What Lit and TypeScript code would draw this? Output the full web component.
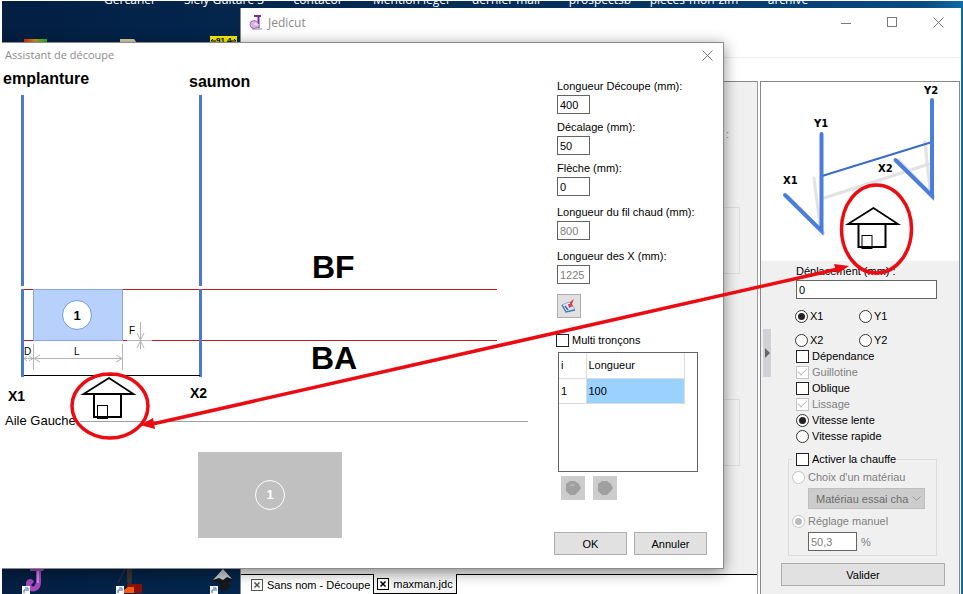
import { LitElement, html, css, svg } from "lit";
import { customElement, state } from "lit/decorators.js";

const house = svg`
  <path d="M109 378 L83.500 394 H133.500 Z" fill="none" stroke="#000" stroke-width="1.800" />
  <rect x="94" y="394" width="27" height="23" fill="none" stroke="#000" stroke-width="2" />
  <rect x="97.500" y="405.500" width="10" height="13" fill="none" stroke="#000" stroke-width="1" />
`;

@customElement("wing-diagram")
class WingDiagram extends LitElement {
  static styles = css`
    :host { display: block; }
    svg { display: block; }
    text { font-family: "Liberation Sans", Arial, sans-serif; }
    .name { font-size: 16px; font-weight: 700; }
    .edge { font-size: 32px; font-weight: 700; }
    .axis { font-size: 14px; font-weight: 700; }
    .dim { font-size: 10px; }
    .num { font-size: 13px; font-weight: 700; text-anchor: middle; }
    .rail { stroke: #4a7ac8; stroke-width: 3; }
    .hot { fill: #c01c28; }
    .cote { stroke: #b4b4b4; fill: none; }
  `;
  render() {
    return html`<svg width="540" height="345" viewBox="0 67 540 345">
      <text class="name" x="3" y="84">emplanture</text>
      <text class="name" x="189" y="87">saumon</text>
      <rect class="hot" x="24" y="289" width="473" height="1" />
      <rect class="hot" x="24" y="340" width="10" height="1" />
      <rect class="hot" x="123" y="340" width="4" height="1" />
      <rect class="hot" x="152" y="340" width="345" height="1" />
      <path class="rail" d="M22.500 95V286 M22.500 289V377 M200.500 95V286 M200.500 289V377" />
      <path d="M24 375.500H200" stroke="#000" />
      <rect x="33.500" y="289.500" width="89" height="51" fill="#b8d1fc" stroke="#85a9e2" />
      <circle cx="77" cy="315" r="14.500" fill="#fff" stroke="#6f9ae0" />
      <text class="num" x="77" y="320">1</text>
      <path class="cote" d="M33.500 344V370 M122.500 344V370 M24 358.500H122 M40 355L34 358.500L40 362 M116 355L122 358.500L116 362 M27 356L24 358.500L27 361 M29 356L33 358.500L29 361" />
      <path class="cote" d="M127 340.500H152 M140.500 322V349 M137 333L140.500 340L144 333 M137 348L140.500 341L144 348" />
      <text class="dim" x="24" y="355">D</text>
      <text class="dim" x="74" y="355">L</text>
      <text class="dim" x="129" y="334">F</text>
      <text class="edge" x="312" y="278">BF</text>
      <text class="edge" x="311" y="369">BA</text>
      <text class="axis" x="8" y="401">X1</text>
      <text class="axis" x="190" y="398">X2</text>
    </svg>`;
  }
}

@customElement("machine-diagram")
class MachineDiagram extends LitElement {
  static styles = css`
    :host { display: block; background: #fff; }
    svg { display: block; }
    text { font: 700 10px "DejaVu Sans", Verdana, sans-serif; }
    .shade { stroke: #e2e2e2; stroke-width: 3; fill: none; stroke-linecap: round; }
    .bar { stroke: #4b7ddc; stroke-width: 4; fill: none; stroke-linecap: round; }
    .wire { stroke: #3a6cc8; stroke-width: 2; }
  `;
  render() {
    return html`<svg width="198" height="179" viewBox="761 82 198 179">
      <path class="shade" d="M814 178L820 226 M925 142L930 190 M824 198L929 164 M788 196L824 233 M899 160L934 197" />
      <path class="wire" d="M822 176L932 142" />
      <path class="bar" d="M785 195L821.500 231V134 M895.500 160L932 196V100" />
      <text x="814" y="127">Y1</text>
      <text x="924" y="94">Y2</text>
      <text x="783" y="184">X1</text>
      <text x="878" y="172">X2</text>
    </svg>`;
  }
}

const controls = css`
  * { box-sizing: border-box; }
  input, button, select, label, table, p, h2 { font: inherit; margin: 0; }
  input[type="text"] {
    height: 19px; padding: 0 2px; border: 1px solid #646464; border-radius: 0;
    background: #fff; color: #000; display: block;
  }
  input[type="text"]:disabled { color: #808080; }
  input[type="checkbox"], input[type="radio"] {
    appearance: none; flex: none; width: 13px; height: 13px; background: #fff;
    border: 1px solid #222; display: grid; place-items: center;
  }
  input[type="radio"] { border-radius: 50%; border-color: #333; }
  input[type="radio"]:checked::before {
    content: ""; width: 7px; height: 7px; border-radius: 50%; background: #222;
  }
  input[type="checkbox"]:checked::before {
    content: ""; width: 8px; height: 4px; margin-bottom: 3px;
    border: solid #bbb; border-width: 0 0 1px 1px; transform: rotate(-45deg);
  }
  input[type="checkbox"]:disabled, input[type="radio"]:disabled { border-color: #c4c4c4; }
  input[type="radio"]:disabled::before { background: #bbb; }
  .option { display: flex; align-items: center; gap: 3px; height: 16px; white-space: nowrap; }
  .option.off { color: #808080; }
  .push {
    height: 23px; padding: 0; border: 1px solid #adadad; border-radius: 0;
    background: #e1e1e1; color: #000;
  }
`;

@customElement("cut-dialog")
class CutDialog extends LitElement {
  static styles = [controls, css`
    :host { display: flex; flex-direction: column; }
    .bar {
      height: 24px; padding: 0 10px 0 5px; display: flex; align-items: center;
      justify-content: space-between; color: #8c8c8c;
    }
    .title { font: 11px/16px "Open Sans", "Segoe UI", sans-serif; }
    .close { border: 0; padding: 0; background: none; display: block; }
    .close svg { display: block; }
    .content { flex: 1; display: flex; justify-content: space-between; }
    .heading { display: flex; align-items: center; height: 18px; padding-left: 5px; gap: 4px; }
    .heading h2 { font-size: 13px; font-weight: 400; }
    .heading hr { flex: 1; margin: 0 12px 0 0; border: 0; border-top: 1px solid #a0a0a0; }
    .preview {
      margin: 22px 0 0 198px; width: 144px; height: 86px; background: #c0c0c0;
      display: flex; align-items: center; justify-content: center;
    }
    .badge {
      width: 30px; height: 30px; border: 1px solid #fff; border-radius: 50%; color: #fff;
      font: 700 13px/28px "Liberation Sans", Arial, sans-serif; text-align: center;
    }
    .form { width: 169px; padding-top: 11px; }
    .fields { display: flex; flex-direction: column; gap: 5px; padding-left: 3px; }
    .fields.fixed { gap: 8px; margin-top: 8px; }
    .field label { display: block; height: 17px; line-height: 16px; white-space: nowrap; }
    .field input { width: 33px; }
    .tool {
      width: 24px; height: 24px; margin: 10px 0 0 3px; padding: 3px; display: block;
      border: 1px solid #adadad; background: #e1e1e1;
    }
    .multi { margin: 14px 0 4px 2px; }
    .grid { width: 140px; height: 120px; margin-left: 4px; border: 1px solid #646464; }
    table { border-collapse: collapse; table-layout: fixed; width: 126px; }
    th, td {
      height: 25px; padding: 0 2px; text-align: left; font-weight: 400;
      border: solid #dcdcdc; border-width: 0 1px 1px 0;
    }
    .index { width: 27px; }
    .picked { background: #99d1ff; }
    .arrows { display: flex; gap: 8px; margin: 4px 0 32px 7px; }
    .arrow { width: 24px; height: 24px; padding: 3px; border: 0; background: #ccc; }
    .arrow svg { display: block; }
    .actions { display: flex; gap: 7px; }
    .actions .push { width: 73px; }
  `];

  @state() private sizes = [
    { id: "cut", label: "Longueur Découpe (mm):", value: "400" },
    { id: "shift", label: "Décalage (mm):", value: "50" },
    { id: "sweep", label: "Flèche (mm):", value: "0" },
  ];
  @state() private limits = [
    { id: "wire", label: "Longueur du fil chaud (mm):", value: "800" },
    { id: "xlen", label: "Longueur des X (mm):", value: "1225" },
  ];

  private field(f: { id: string; label: string; value: string }, off: boolean) {
    return html`<div class="field">
      <label for=${f.id}>${f.label}</label>
      <input type="text" id=${f.id} .value=${f.value} ?disabled=${off} />
    </div>`;
  }

  render() {
    return html`
      <div class="bar">
        <span class="title">Assistant de découpe</span>
        <button class="close" aria-label="Fermer">
          <svg width="11" height="11"><path d="M0.500 0.500L10.500 10.500M10.500 0.500L0.500 10.500" stroke="#777" /></svg>
        </button>
      </div>
      <div class="content">
        <div>
          <wing-diagram></wing-diagram>
          <div class="heading"><h2>Aile Gauche</h2><hr /></div>
          <div class="preview"><span class="badge">1</span></div>
        </div>
        <div class="form">
          <div class="fields">${this.sizes.map((f) => this.field(f, false))}</div>
          <div class="fields fixed">${this.limits.map((f) => this.field(f, true))}</div>
          <button class="tool" aria-label="Appliquer">
            <svg width="16" height="16" viewBox="0 0 16 16">
              <path d="M1 7L8 4L14 11L5 14Z" fill="#dbe9f7" stroke="#8fadd0" />
              <path d="M1 7L5 14L14 12" fill="none" stroke="#4d7fb8" stroke-width="1.500" />
              <path d="M4 8L7 12" fill="none" stroke="#3f70ac" stroke-width="1.500" />
              <path d="M13 1L9 4L9 6L7 6L8 10L12 8L11 6Z" fill="#d8424c" />
            </svg>
          </button>
          <label class="option multi"><input type="checkbox" />Multi tronçons</label>
          <div class="grid">
            <table>
              <tr><th class="index">i</th><th>Longueur</th></tr>
              <tr><td>1</td><td class="picked">100</td></tr>
            </table>
          </div>
          <div class="arrows">
            <button class="arrow" aria-label="Ajouter" disabled>
              <svg width="18" height="18"><path d="M6 2H11L15 5L17 9L15 12L11 16H6L2 12V5Z" fill="#a0a0a0" /><path d="M6 6H11" stroke="#c4c4c4" /></svg>
            </button>
            <button class="arrow" aria-label="Supprimer" disabled>
              <svg width="18" height="18"><path d="M6 2H11L15 5L17 9L15 12L11 16H6L2 12V5Z" fill="#a0a0a0" /></svg>
            </button>
          </div>
          <div class="actions">
            <button class="push">OK</button>
            <button class="push">Annuler</button>
          </div>
        </div>
      </div>
    `;
  }
}

@customElement("move-panel")
class MovePanel extends LitElement {
  static styles = [controls, css`
    :host { display: flex; flex-direction: column; }
    .body { flex: 1; display: flex; align-items: flex-start; background: #f0f0f0; }
    .handle {
      flex: none; width: 8px; height: 48px; margin: 68px 0 0 2px; padding: 0;
      border: 0; background: #d2d2d6;
    }
    .handle svg { display: block; }
    .form { flex: 1; padding: 2px 14px 0 10px; }
    .main { padding: 0 8px 0 15px; }
    .caption { display: block; height: 17px; line-height: 16px; }
    .main input[type="text"] { width: 100%; }
    .axes { display: grid; grid-template-columns: 64px 1fr; row-gap: 8px; padding: 9px 0 0; margin-left: -1px; }
    .axes .option { gap: 2px; }
    .heat {
      min-width: 0; margin: 7px 8px 0 7px; padding: 0 0 4px 3px; border: 1px solid #dcdcdc; height: 105px;
    }
    .heat legend { padding: 0 0 0 4px; height: 16px; margin: 0; }
    .stack { margin-top: -1px; }
    .stack .option { height: 22px; }
    select {
      display: block; width: 117px; height: 21px; margin: 0 0 1px 16px; padding: 0 7px;
      border: 1px solid #bfbfbf; border-radius: 0; background: #ccc; color: #6d6d6d; opacity: 1;
      appearance: none;
    }
    .pick { position: relative; width: max-content; }
    .pick svg { position: absolute; right: 4px; top: 8px; }
    .power { display: flex; align-items: center; gap: 4px; margin-left: 16px; color: #808080; }
    .power input { width: 49px; }
    .valid { display: block; width: 164px; margin: 7px 0 7px; }
  `];

  render() {
    return html`
      <machine-diagram></machine-diagram>
      <div class="body">
        <button class="handle" aria-label="Replier">
          <svg width="8" height="48"><path d="M2 19L7 24L2 29Z" fill="#666" /></svg>
        </button>
        <div class="form">
          <div class="main">
            <label class="caption" for="move">Déplacement (mm) :</label>
            <input type="text" id="move" value="0" />
            <div class="axes">
              ${["X1", "Y1", "X2", "Y2"].map((a) => html`
                <label class="option"><input type="radio" name="axis" ?checked=${a === "X1"} />${a}</label>`)}
            </div>
            <label class="option"><input type="checkbox" />Dépendance</label>
            <label class="option off"><input type="checkbox" checked disabled />Guillotine</label>
            <label class="option"><input type="checkbox" />Oblique</label>
            <label class="option off"><input type="checkbox" checked disabled />Lissage</label>
            <label class="option"><input type="radio" name="speed" checked />Vitesse lente</label>
            <label class="option"><input type="radio" name="speed" />Vitesse rapide</label>
          </div>
          <fieldset class="heat">
            <legend><label class="option"><input type="checkbox" />Activer la chauffe</label></legend>
            <div class="stack">
              <label class="option off"><input type="radio" name="heat" disabled />Choix d'un matériau</label>
              <div class="pick">
                <select disabled aria-label="Matériau"><option>Matériau essai cha</option></select>
                <svg width="9" height="6"><path d="M0.500 0.500L4.500 4.500L8.500 0.500" fill="none" stroke="#999" /></svg>
              </div>
              <label class="option off"><input type="radio" name="heat" checked disabled />Réglage manuel</label>
              <div class="power"><input type="text" value="50,3" disabled aria-label="Réglage" />%</div>
            </div>
          </fieldset>
          <button class="push valid">Valider</button>
        </div>
      </div>
    `;
  }
}

@customElement("app-root")
class AppRoot extends LitElement {
  static styles = css`
    * { box-sizing: border-box; }
    :host {
      display: block; position: relative; min-height: 100vh; overflow: hidden;
      border-left: 2px solid #fff; border-top: 1px solid #fff;
      background: linear-gradient(90deg, #031f42 0%, #04305c 60%, #0a4a80 96%, #0c6ca6 100%);
      font: 11px/14px "Liberation Sans", Arial, sans-serif; color: #000;
    }
    .shortcuts { display: grid; grid-template-columns: repeat(8, 94px); padding-left: 81px; height: 7px; overflow: hidden; }
    .shortcut {
      color: #fff; font: 12px/16px "Open Sans", "Segoe UI", sans-serif; text-align: center;
      margin-top: -9px; height: 16px; white-space: nowrap;
    }
    .icons { position: absolute; left: 0; display: block; }
    .icons.top { top: 35px; }
    .icons.bottom { top: 567px; }
    .window {
      position: absolute; left: 238px; right: 2px; top: 7px; bottom: 0; background: #fff;
      border-left: 1px solid #888; display: flex; flex-direction: column;
    }
    .bar { display: flex; align-items: center; height: 29px; padding: 0 16px 0 8px; gap: 5px; color: #8a8a8a; }
    .bar .name { flex: 1; font: 12px/16px "Open Sans", "Segoe UI", sans-serif; }
    .bar svg { display: block; }
    .controls { display: flex; gap: 34px; }
    .controls button { border: 0; padding: 0; background: none; width: 12px; }
    .menu { height: 21px; border-bottom: 1px solid #eee; }
    .work { flex: 1; display: flex; gap: 2px; padding: 23px 1px 0 0; }
    .sheet { flex: 1; display: flex; flex-direction: column; border-right: 1px solid #999; }
    .pane { flex: 1; padding: 45px 17px 0 10px; background: #f0f0f0; border-top: 1px solid #888; }
    .hint { margin: 0; padding-right: 11px; height: 80px; text-align: right; color: #888; }
    .group { height: 67px; margin-bottom: 125px; border: 1px solid #dcdcdc; }
    .group + .group { margin-bottom: 0; }
    .tabs { display: flex; height: 21px; }
    .tab {
      flex: none; display: flex; align-items: center; gap: 4px; height: 20px; padding: 0 3px;
      border: solid #000; border-width: 1px 0 0; background: #fff; color: #000;
      font: inherit; white-space: nowrap;
    }
    .tab svg { flex: none; }
    .tab.first { padding-left: 10px; }
    .tab.active { border-width: 0 1px 1px; background: #f4f4f4; }
    .rest { flex: 1; border-top: 1px solid #000; }
    .side { width: 200px; border: 1px solid #888; border-bottom: 0; }
    .dialog {
      position: absolute; left: -2px; top: 41px; width: 724px; min-height: 527px;
      background: #fff; border: solid #8a8a8a; border-width: 1px 1px 1px 0; box-shadow: 0 3px 14px rgba(0, 0, 0, 0.45);
    }
    .notes { position: absolute; left: -2px; top: -1px; pointer-events: none; }
    .notes .red { fill: none; stroke: #ea0c12; stroke-width: 3.500; }
    .notes .tip { fill: #ea0c12; }
    .mark { font: 700 8px/8px "Liberation Sans", Arial, sans-serif; }
  `;

  private names = ["Gercaner", "Siely Guitare 3", "contacor", "Mention leger", "dernier mail", "prospectsb", "pieces-mon-zim", "archive"];

  private closeMark(color: string) {
    return html`<svg width="12" height="12"><rect x="0.500" y="0.500" width="11" height="11" fill="#fff" stroke=${color} /><path d="M3.500 3.500L8.500 8.500M8.500 3.500L3.500 8.500" stroke=${color} stroke-width="1.500" /></svg>`;
  }

  render() {
    return html`
      <div class="shortcuts">${this.names.map((n) => html`<span class="shortcut">${n}</span>`)}</div>
      <svg class="icons top" width="240" height="7" viewBox="2 36 240 7">
        <defs><linearGradient id="rainbow"><stop offset="0" stop-color="#e02a10" /><stop offset="0.500" stop-color="#c8a020" /><stop offset="1" stop-color="#18b838" /></linearGradient></defs>
        <rect x="24" y="39" width="23" height="4" fill="url(#rainbow)" />
        <path d="M120 39H134L137 43H120Z" fill="#d8d0a8" />
        <rect x="210" y="36" width="27" height="7" fill="#f4f000" />
        <path d="M211 41H216M231 41H236M213 39L211 41M234 39L236 41" stroke="#000" />
        <text class="mark" x="216" y="43">91.4</text>
      </svg>
      <svg class="icons bottom" width="240" height="26" viewBox="2 568 240 26">
        <path d="M30 568H45L43 571H41V582C41 594 27 594 26 585C25 578 33 577 34 582L31 585C33 588 36 586 36 581V571H30Z" fill="#a848c0" />
        <path d="M38 571V583" stroke="#e09cf0" stroke-width="1.500" />
        <path d="M127 584H142V593H127Z" fill="#8c1008" /><path d="M124 590L128 587H134V593H124Z" fill="#ff5a10" />
        <path d="M127 568H132V582L130 586L127 582Z" fill="#3a3430" /><path d="M118 583L125 569" stroke="#3a3430" />
        <path d="M223 569L233 580L228 583L231 586L224 592L218 587L221 584L212 581Z" fill="#17181c" />
        <path d="M223 569L232 579L227 577L223 580L219 578L213 580Z" fill="#c4cad2" />
        ${[22, 116, 210].map((x) => svg`<rect x=${x} y="586" width="8" height="8" fill="#fff" /><path d=${`M${x + 2} 593V590H${x + 5}M${x + 3} 588H${x + 6}V591`} fill="none" stroke="#2a68c0" />`)}
      </svg>

      <section class="window">
        <header class="bar">
          <svg width="14" height="15" viewBox="0 0 14 15">
            <path d="M5 1H12M9.500 1V13" fill="none" stroke="#7b2a9c" stroke-width="2" />
            <circle cx="5" cy="9.500" r="4" fill="#d4b4e2" stroke="#a465bd" /><path d="M5 9H9V12" fill="none" stroke="#fff" />
            <path d="M3 14H13" stroke="#9a78b0" />
          </svg>
          <span class="name">Jedicut</span>
          <span class="controls">
            <button aria-label="Réduire"><svg width="11" height="11"><path d="M0 6.500H10" stroke="#777" /></svg></button>
            <button aria-label="Agrandir"><svg width="11" height="11"><rect x="0.500" y="0.500" width="9" height="9" fill="none" stroke="#777" /></svg></button>
            <button aria-label="Fermer"><svg width="11" height="11"><path d="M0.500 0.500L10.500 10.500M10.500 0.500L0.500 10.500" stroke="#777" /></svg></button>
          </span>
        </header>
        <div class="menu"></div>
        <div class="work">
          <div class="sheet">
            <div class="pane">
              <p class="hint">:</p>
              <div class="group"></div>
              <div class="group"></div>
            </div>
            <nav class="tabs">
              <button class="tab first">${this.closeMark("#555")}Sans nom - Découpe</button>
              <button class="tab active">${this.closeMark("#000")}maxman.jdc</button>
              <span class="rest"></span>
            </nav>
          </div>
          <move-panel class="side"></move-panel>
        </div>
      </section>

      <cut-dialog class="dialog"></cut-dialog>

      <svg class="notes" width="963" height="594" viewBox="0 0 963 594">
        <g>${house}</g>
        <g transform="translate(764.500 -170)">${house}</g>
        <ellipse class="red" cx="110" cy="406" rx="38" ry="32" />
        <ellipse class="red" cx="876.500" cy="229" rx="35" ry="44" />
        <path class="red" d="M148 425L838 269" />
        <path class="tip" d="M140 425L153 418L155 429Z M849 266L834 264L837 274Z" />
      </svg>
    `;
  }
}
